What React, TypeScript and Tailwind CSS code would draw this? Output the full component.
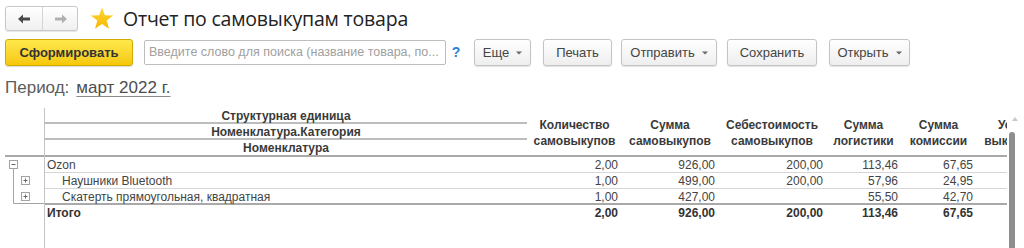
import React from 'react';

const btn =
  'h-[27px] shrink-0 flex items-center justify-center gap-[7px] rounded-[3px] border border-[#c4c4c4] bg-gradient-to-b from-white to-[#eeeeee] shadow-[0_1px_1px_rgba(0,0,0,0.12)] text-[13px] text-[#444]';

function Caret() {
  return (
    <svg width="6" height="4" viewBox="0 0 6 4" className="mt-[1px]">
      <path d="M0 0.5 H6 L3 3.5 Z" fill="#666" />
    </svg>
  );
}

function TreeBox({ plus }: { plus?: boolean }) {
  return (
    <g>
      <rect width="8" height="8" fill="white" stroke="#a3a3a3" />
      <path d="M2 4 H6" stroke="#666" />
      {plus && <path d="M4 2 V6" stroke="#666" />}
    </g>
  );
}

const cols = [
  { w: 'w-[95px]', pr: 'pr-[4px]', h1: 'Количество', h2: 'самовыкупов' },
  { w: 'w-[96px]', pr: 'pr-[3px]', h1: 'Сумма', h2: 'самовыкупов' },
  { w: 'w-[108px]', pr: 'pr-[3px]', h1: 'Себестоимость', h2: 'самовыкупов' },
  { w: 'w-[75px]', pr: 'pr-[3px]', h1: 'Сумма', h2: 'логистики' },
  { w: 'w-[75px]', pr: 'pr-[3px]', h1: 'Сумма', h2: 'комиссии' },
  { w: 'w-[84px]', pr: 'pr-[3px]', h1: 'Услуги', h2: 'выкупщика' },
];

const rows = [
  { name: 'Ozon', indent: 'pl-[2px]', vals: ['2,00', '926,00', '200,00', '113,46', '67,65', ''] },
  { name: 'Наушники Bluetooth', indent: 'pl-[17px]', vals: ['1,00', '499,00', '200,00', '57,96', '24,95', ''] },
  { name: 'Скатерть прямоугольная, квадратная', indent: 'pl-[17px]', vals: ['1,00', '427,00', '', '55,50', '42,70', ''] },
];

export default function App() {
  return (
    <div className="w-[1024px] h-[248px] overflow-hidden bg-white font-['Liberation_Sans',Arial,sans-serif] text-[#333]">
      {/* title bar */}
      <div className="flex items-center h-[25px] mt-[6px] ml-[5px]">
        <div className="flex h-[25px] w-[73px] rounded-[3px] border border-[#c8c8c8] bg-gradient-to-b from-white to-[#f0f0f0] shadow-[0_1px_1px_rgba(0,0,0,0.1)]">
          <div className="w-[37px] flex items-center justify-center border-r border-[#d4d4d4]">
            <svg width="13" height="10" viewBox="0 0 13 10">
              <path d="M0 5 L5 0.5 V3.5 H12 V6.5 H5 V9.5 Z" fill="#4a4a4a" />
            </svg>
          </div>
          <div className="flex-1 flex items-center justify-center">
            <svg width="13" height="10" viewBox="0 0 13 10">
              <path d="M13 5 L8 0.5 V3.5 H1 V6.5 H8 V9.5 Z" fill="#b0b0b0" />
            </svg>
          </div>
        </div>
        <svg width="24" height="23" viewBox="0 0 24 23" className="ml-[12px]">
          <defs>
            <linearGradient id="st" x1="0" y1="0" x2="0" y2="1">
              <stop offset="0" stopColor="#ffd83a" />
              <stop offset="1" stopColor="#f5b800" />
            </linearGradient>
          </defs>
          <path
            d="M12 0.5 L14.9 8.2 L23.2 8.5 L16.7 13.6 L19 21.8 L12 17.1 L5 21.8 L7.3 13.6 L0.8 8.5 L9.1 8.2 Z"
            fill="url(#st)"
          />
        </svg>
        <div className="ml-[9px] text-[19.5px] leading-[25px] text-[#222] font-['Open_Sans','Noto_Sans',sans-serif] tracking-[-0.2px]">
          Отчет по самовыкупам товара
        </div>
      </div>

      {/* command bar */}
      <div className="flex items-center h-[27px] mt-[8px] ml-[5px]">
        <div className="h-[27px] w-[128px] shrink-0 flex items-center justify-center rounded-[3px] border border-[#d2ab00] bg-gradient-to-b from-[#ffe84a] to-[#f5c800] shadow-[0_1px_1px_rgba(0,0,0,0.15)] text-[13px] font-bold text-[#333]">
          Сформировать
        </div>
        <div className="ml-[11px] h-[25px] w-[302px] shrink-0 flex items-center rounded-[2px] border border-[#bdbdbd] pl-[4px] text-[12.5px] text-[#a0a0a0] whitespace-nowrap overflow-hidden">
          Введите слово для поиска (название товара, по...
        </div>
        <span className="w-[20px] text-center text-[14px] font-bold text-[#2c7fd6]">?</span>
        <div className={`${btn} ml-[8px] w-[57px]`}>
          Еще <Caret />
        </div>
        <div className={`${btn} ml-[12px] w-[69px]`}>Печать</div>
        <div className={`${btn} ml-[9px] w-[96px]`}>
          Отправить <Caret />
        </div>
        <div className={`${btn} ml-[10px] w-[90px]`}>Сохранить</div>
        <div className={`${btn} ml-[12px] w-[81px]`}>
          Открыть <Caret />
        </div>
      </div>

      {/* period */}
      <div className="flex items-center h-[20px] mt-[12px] ml-[5px] text-[17px] text-[#5c5c5c]">
        <span>Период:</span>
        <span className="ml-[7px] underline underline-offset-[3px] decoration-[#8a8a8a] text-[#4d4d4d]">март 2022 г.</span>
      </div>

      {/* report */}
      <div className="flex mt-[10px] h-[140px] text-[12px]">
        <div className="w-[44px] shrink-0 flex flex-col">
          <div className="h-[49px] ml-[5px] border-b-2 border-[#a9a9a9]" />
          <svg width="44" height="60" viewBox="0 0 44 60">
            <path d="M13.5 11.5 V46.5 H44" stroke="#a3a3a3" fill="none" />
            <g transform="translate(9.5 3.5)">
              <TreeBox />
            </g>
            <g transform="translate(21.5 19.5)">
              <TreeBox plus />
            </g>
            <g transform="translate(21.5 35.5)">
              <TreeBox plus />
            </g>
          </svg>
        </div>

        <div className="w-[963px] shrink-0 border-l border-[#c4c4c4] overflow-hidden">
          <div className="flex h-[49px] border-b-2 border-[#a9a9a9] font-bold text-[#3a3a3a]">
            <div className="w-[482px] shrink-0 flex flex-col">
              <div className="h-[16px] leading-[17px] text-center border-b-2 border-[#bdbdbd]">Структурная единица</div>
              <div className="h-[16px] leading-[17px] text-center border-b-2 border-[#bdbdbd]">Номенклатура.Категория</div>
              <div className="h-[15px] leading-[17px] text-center">Номенклатура</div>
            </div>
            {cols.map((c, i) => (
              <div key={i} className={`${c.w} shrink-0 flex flex-col items-center justify-center pt-[3px] leading-[16px] whitespace-nowrap`}>
                <span>{c.h1}</span>
                <span>{c.h2}</span>
              </div>
            ))}
          </div>

          {rows.map((r, i) => (
            <div
              key={i}
              className={`flex h-[16px] leading-[16px] text-[#444] ${
                i === rows.length - 1 ? 'border-b-2 border-[#a9a9a9]' : 'border-b border-[#d6d6d6]'
              }`}
            >
              <div className={`w-[482px] shrink-0 ${r.indent} whitespace-nowrap`}>{r.name}</div>
              {cols.map((c, j) => (
                <div key={j} className={`${c.w} shrink-0 text-right ${c.pr}`}>
                  {r.vals[j]}
                </div>
              ))}
            </div>
          ))}

          <div className="flex h-[16px] leading-[16px] font-bold text-[#333]">
            <div className="w-[482px] shrink-0 pl-[2px]">Итого</div>
            {['2,00', '926,00', '200,00', '113,46', '67,65', ''].map((v, j) => (
              <div key={j} className={`${cols[j].w} shrink-0 text-right ${cols[j].pr}`}>
                {v}
              </div>
            ))}
          </div>
        </div>

        <div className="w-[17px] shrink-0 flex flex-col items-start">
          <svg width="10" height="6" viewBox="0 0 10 6" className="ml-[3px] mt-[8px]">
            <path d="M5 1 L8 5 H2 Z" fill="#c8c8c8" />
          </svg>
          <div className="ml-[2px] mt-[10px] w-[6px] flex-1 rounded-t-full bg-[#8e8e8e]" />
        </div>
      </div>
    </div>
  );
}
